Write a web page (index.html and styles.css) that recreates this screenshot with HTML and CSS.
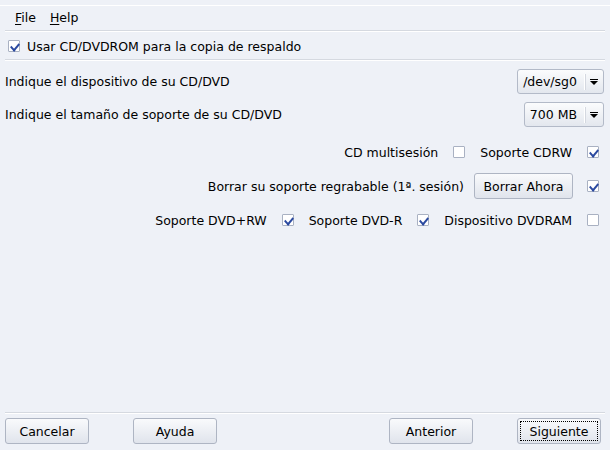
FILE: index.html
```html
<!DOCTYPE html>
<html>
<head>
<meta charset="utf-8">
<link rel="stylesheet" href="styles.css">
</head>
<body>
<div class="window">
  <div class="topline"></div>
  <div class="menubar">
    <span class="menu"><u>F</u>ile</span>
    <span class="menu"><u>H</u>elp</span>
  </div>
  <div class="sep"></div>
  <label class="usecd">
    <span class="cb checked"></span>
    <span>Usar CD/DVDROM para la copia de respaldo</span>
  </label>
  <div class="sep"></div>
  <div class="content">
    <div class="field first">
      <span>Indique el dispositivo de su CD/DVD</span>
      <span class="combo"><span class="combo-text">/dev/sg0</span><span class="combo-arrow"></span></span>
    </div>
    <div class="field second">
      <span>Indique el tamaño de soporte de su CD/DVD</span>
      <span class="combo"><span class="combo-text">700 MB</span><span class="combo-arrow"></span></span>
    </div>
    <div class="opts row1">
      <span class="lbl">CD multisesión</span><span class="cb"></span>
      <span class="lbl">Soporte CDRW</span><span class="cb checked"></span>
    </div>
    <div class="opts row2">
      <span>Borrar su soporte regrabable (1ª. sesión)</span>
      <span class="btn erase">Borrar Ahora</span>
      <span class="cb checked"></span>
    </div>
    <div class="opts row3">
      <span class="lbl">Soporte DVD+RW</span><span class="cb checked"></span>
      <span class="lbl">Soporte DVD-R</span><span class="cb checked"></span>
      <span class="lbl">Dispositivo DVDRAM</span><span class="cb"></span>
    </div>
  </div>
  <div class="bottomsep"></div>
  <div class="buttons">
    <div class="group">
      <span class="btn">Cancelar</span>
      <span class="btn">Ayuda</span>
    </div>
    <div class="group">
      <span class="btn">Anterior</span>
      <span class="btn focus"><span class="focus-ring">Siguiente</span></span>
    </div>
  </div>
</div>
</body>
</html>
```

FILE: styles.css
```css
html, body {
  margin: 0;
  padding: 0;
  background: #eef1f7;
}
body {
  font-family: "DejaVu Sans", sans-serif;
  font-size: 12.5px;
  color: #000;
}
.window {
  width: 610px;
  height: 450px;
  display: flex;
  flex-direction: column;
  box-sizing: border-box;
}
.topline {
  height: 1px;
  margin-top: 5px;
  background: #ffffff;
}
.menubar {
  display: flex;
  gap: 14px;
  padding: 3px 0 0 15px;
  height: 21px;
  box-sizing: border-box;
  line-height: 17px;
}
.menu u {
  text-decoration: underline;
  text-underline-offset: 2px;
}
.sep {
  height: 1px;
  background: #d5d9e0;
  margin: 3px 5px 0 5px;
  border-bottom: 1px solid #ffffff;
}
.usecd {
  display: flex;
  align-items: center;
  gap: 7px;
  padding: 6px 8px 2px 8px;
  height: 16px;
}
.cb {
  display: inline-block;
  width: 10px;
  height: 10px;
  border: 1px solid #a9b1c2;
  background: #ffffff;
  border-radius: 1px;
  position: relative;
  flex: none;
}
.cb.checked::after {
  content: "";
  position: absolute;
  left: 2px;
  top: 0px;
  width: 7px;
  height: 4px;
  border-left: 2px solid #2a49a0;
  border-bottom: 2px solid #2a49a0;
  transform: translate(-0.5px, 2px) rotate(-50deg) skewX(-8deg);
  transform-origin: 50% 50%;
}
.content {
  flex: 1;
  display: flex;
  flex-direction: column;
  padding: 0 6px 0 5px;
}
.field {
  display: flex;
  justify-content: space-between;
  align-items: center;
  height: 33px;
}
.field.first {
  margin-top: 4px;
}
.combo {
  display: flex;
  align-items: center;
  height: 25px;
  box-sizing: border-box;
  border: 1px solid #b3bac8;
  border-radius: 3px;
  background: linear-gradient(#fbfcfd, #e3e7ee);
}
.combo-text {
  padding: 0 7px 0 5px;
  border-right: 1px solid #ffffff;
  box-shadow: 1px 0 0 #d4d8e0;
  height: 16px;
  line-height: 16px;
}
.combo-arrow {
  width: 18px;
  height: 16px;
  position: relative;
}
.combo-arrow::before {
  content: "";
  position: absolute;
  left: 5px;
  top: 7px;
  width: 0;
  height: 0;
  border-left: 4px solid transparent;
  border-right: 4px solid transparent;
  border-top: 4px solid #000;
}
.combo-arrow::after {
  content: "";
  position: absolute;
  left: 5px;
  top: 5px;
  width: 8px;
  height: 1px;
  background: #000;
}
.opts {
  display: flex;
  justify-content: flex-end;
  align-items: center;
  gap: 14px;
  padding-right: 4px;
  height: 34px;
}
.opts .lbl {
  margin-right: 1px;
}
.opts .cb {
  margin-right: 1px;
}
.row1 {
  margin-top: 4px;
}
.btn {
  display: inline-flex;
  align-items: center;
  justify-content: center;
  height: 26px;
  box-sizing: border-box;
  border: 1px solid #aeb5c3;
  border-radius: 3px;
  background: linear-gradient(#f9fafc, #e0e4ec);
  width: 84px;
}
.btn.erase {
  width: 99px;
  margin-left: -4px;
}
.bottomsep {
  height: 1px;
  background: #d5d9e0;
  border-bottom: 1px solid #ffffff;
  margin: 0 5px 4px 5px;
}
.buttons {
  display: flex;
  justify-content: space-between;
  padding: 0 9px 6px 5px;
}
.group {
  display: flex;
  gap: 44px;
}
.focus-ring {
  display: inline-block;
  border: 1px dotted #000;
  width: 78px;
  height: 20px;
  line-height: 20px;
  text-align: center;
  box-sizing: border-box;
}
```
